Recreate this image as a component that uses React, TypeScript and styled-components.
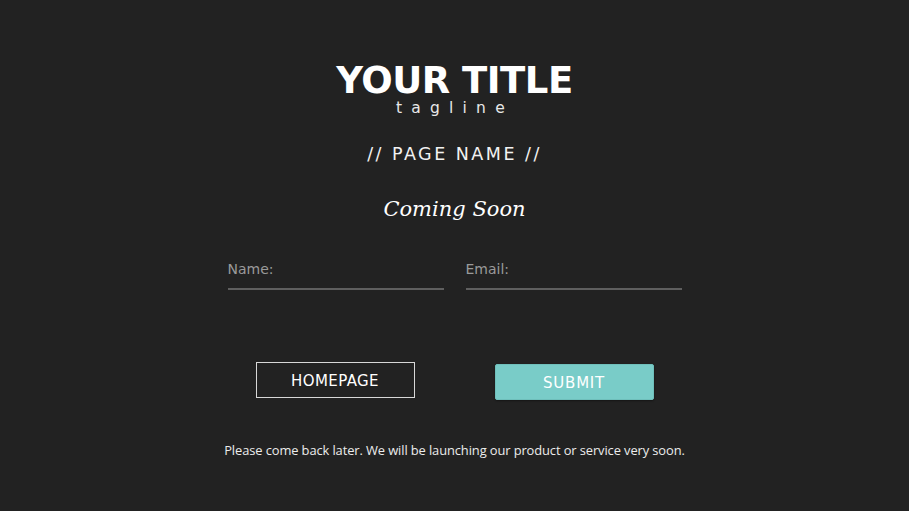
import React from "react";
import styled, { createGlobalStyle } from "styled-components";

const Global = createGlobalStyle`
  html, body { margin: 0; padding: 0; background: #222222; }
  body { font-family: "DejaVu Sans", "Noto Sans", sans-serif; }
  * { box-sizing: border-box; }
`;

const Page = styled.div`
  width: 909px;
  height: 511px;
  background: #222222;
  display: flex;
  flex-direction: column;
  align-items: center;
  padding-top: 65px;
`;

const Title = styled.h1`
  margin: 0;
  font-family: "DejaVu Sans", sans-serif;
  font-weight: 700;
  font-size: 37px;
  line-height: 32px;
  color: #ffffff;
  letter-spacing: -0.5px;
`;

const Tagline = styled.div`
  margin-top: 4px;
  margin-left: 1px;
  font-family: "DejaVu Sans", sans-serif;
  font-size: 15.5px;
  line-height: 15px;
  color: #e8e8e8;
  letter-spacing: 9.2px;
`;

const PageName = styled.h2`
  margin: 27px 0 0;
  font-family: "DejaVu Sans", sans-serif;
  font-weight: 400;
  font-size: 17.5px;
  line-height: 22px;
  color: #f2f2f2;
  letter-spacing: 2.5px;
`;

const Coming = styled.h3`
  margin: 30px 0 0;
  font-family: "DejaVu Serif", serif;
  font-style: italic;
  font-weight: 400;
  font-size: 21px;
  line-height: 28px;
  color: #ffffff;
`;

const Form = styled.form`
  display: flex;
  flex-direction: column;
  align-items: center;
  margin-top: 30px;
`;

const Fields = styled.div`
  display: flex;
  gap: 22px;
`;

const Input = styled.input`
  width: 216px;
  height: 37px;
  background: transparent;
  border: none;
  border-bottom: 2px solid #5f5f5f;
  padding: 0 0 4px;
  font-family: "DejaVu Sans", sans-serif;
  font-size: 14px;
  color: #ddd;
  outline: none;
  &::placeholder { color: #9a9a9a; }
`;

const Buttons = styled.div`
  display: flex;
  gap: 80px;
  margin-top: 72px;
  align-items: flex-start;
`;

const Button = styled.button<{ $primary?: boolean }>`
  width: 159px;
  height: 36px;
  padding: 2px 0 0;
  margin-top: ${(p) => (p.$primary ? "2px" : "0")};
  font-family: "DejaVu Sans", sans-serif;
  font-size: 15px;
  color: #ffffff;
  letter-spacing: ${(p) => (p.$primary ? "0.8px" : "0.4px")};
  background: ${(p) => (p.$primary ? "#79ccc8" : "transparent")};
  border: ${(p) => (p.$primary ? "1px solid #6fbfbb" : "1px solid #d8d8d8")};
  border-radius: ${(p) => (p.$primary ? "2px" : "0")};
  box-shadow: ${(p) => (p.$primary ? "0 1px 2px rgba(0,0,0,0.4)" : "none")};
  cursor: pointer;
`;

const Note = styled.p`
  margin: 42px 0 0;
  font-family: "Open Sans", "Noto Sans", sans-serif;
  font-size: 12.9px;
  line-height: 16px;
  color: #ececec;
  letter-spacing: -0.1px;
`;

export default function App() {
  return (
    <Page>
      <Global />
      <Title>YOUR TITLE</Title>
      <Tagline>tagline</Tagline>
      <PageName>// PAGE NAME //</PageName>
      <Coming>Coming Soon</Coming>
      <Form onSubmit={(e) => e.preventDefault()}>
        <Fields>
          <Input placeholder="Name:" />
          <Input placeholder="Email:" />
        </Fields>
        <Buttons>
          <Button type="button">HOMEPAGE</Button>
          <Button type="submit" $primary>SUBMIT</Button>
        </Buttons>
      </Form>
      <Note>Please come back later. We will be launching our product or service very soon.</Note>
    </Page>
  );
}
